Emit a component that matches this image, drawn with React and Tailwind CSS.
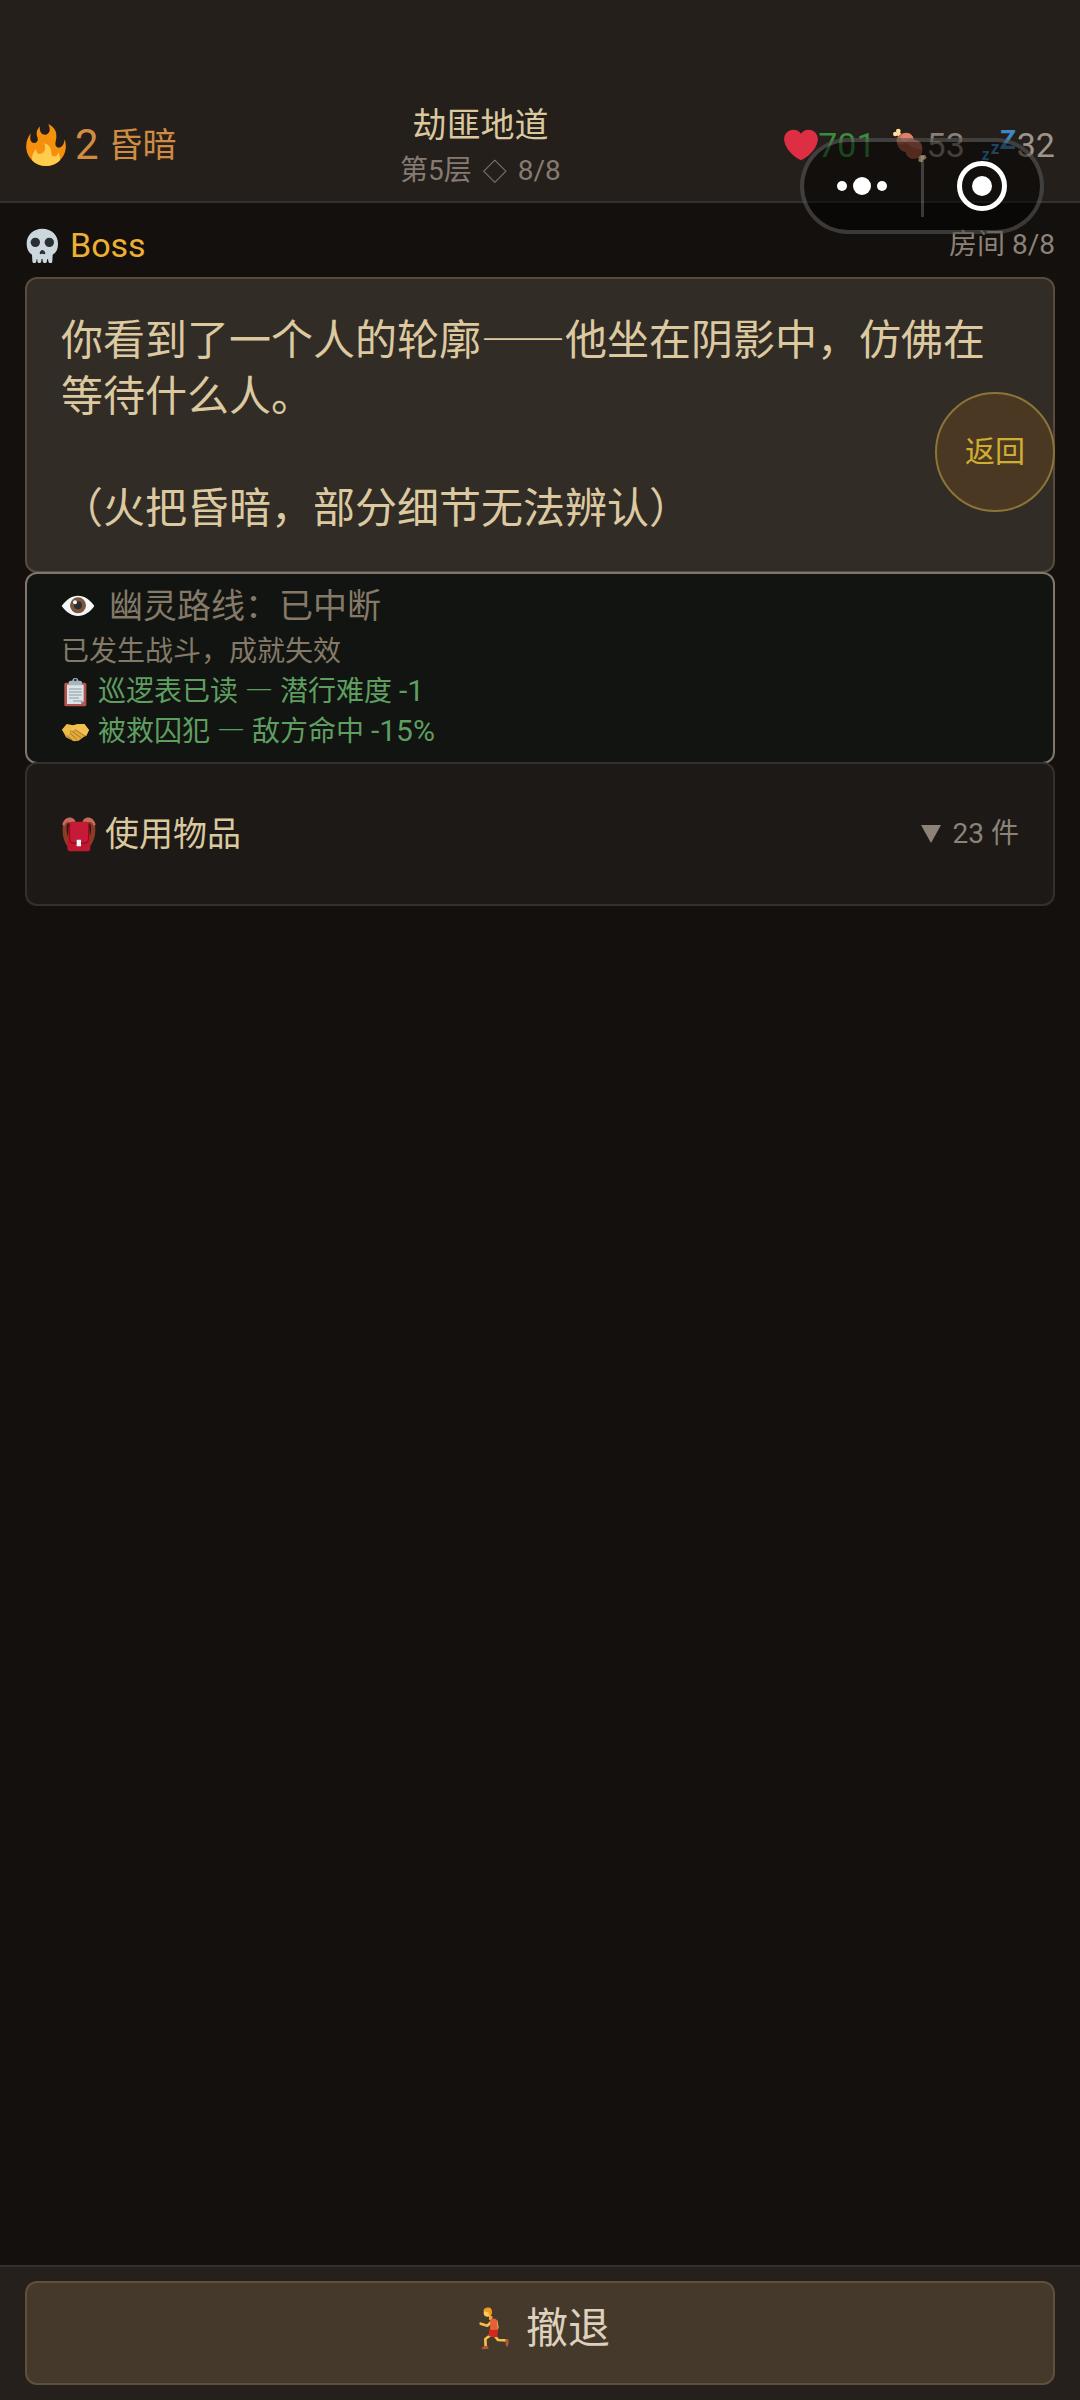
import React, { useState } from 'react';

const FireIcon = () => (
  <svg viewBox="0 0 36 36" className="size-[42px]" aria-hidden="true">
    <path fill="#f4900c" d="M35 19c0-2.062-.367-4.039-1.04-5.868-.46 5.389-3.333 8.157-6.335 6.868-2.812-1.208-.917-5.917-.777-8.164.236-3.809-.012-8.169-6.931-11.794 2.875 5.5.333 8.917-2.333 9.125-2.958.231-5.667-2.542-4.667-7.042-3.238 2.386-3.332 6.402-2.333 9 1.042 2.708-.042 4.958-2.583 5.208-2.84.28-4.418-3.041-2.963-8.333C2.52 10.965 1 14.805 1 19c0 9.389 7.611 17 17 17s17-7.611 17-17z" />
    <path fill="#ffcc4d" d="M28.394 23.999c.148 3.084-2.561 4.293-4.019 3.709-2.106-.843-1.541-2.291-2.083-5.291s-2.625-5.083-5.708-6c2.25 6.333-1.247 8.667-3.08 9.084-1.872.426-3.753-.001-3.968-4.007C7.352 23.668 6 26.676 6 30c0 .368.023.73.055 1.09C9.125 34.124 13.342 36 18 36s8.875-1.876 11.945-4.91c.032-.36.055-.722.055-1.09 0-2.187-.584-4.236-1.606-6.001z" />
  </svg>
);

const HeartIcon = () => (
  <svg viewBox="0 0 36 36" className="size-[34px]" aria-hidden="true">
    <path fill="#dd2e44" d="M35.885 11.833c0-5.45-4.418-9.868-9.867-9.868-3.308 0-6.227 1.633-8.018 4.129-1.791-2.496-4.71-4.129-8.017-4.129-5.45 0-9.868 4.417-9.868 9.868 0 .772.098 1.52.266 2.241C1.751 22.587 11.216 31.568 18 34.034c6.783-2.466 16.249-11.447 17.617-19.959.17-.721.268-1.469.268-2.242z" />
  </svg>
);

const MeatIcon = () => (
  <svg viewBox="443 114 105 105" className="size-[35px]" aria-hidden="true">
    <path d="M460 130l14 14" stroke="#ffdc9a" strokeWidth="9" />
    <path d="M518 190l14 14" stroke="#f0d08c" strokeWidth="9" />
    <g fill="#ffe0a0">
      <circle cx="462" cy="123" r="7" />
      <circle cx="453" cy="132" r="7" />
      <circle cx="464" cy="133" r="6" />
    </g>
    <g fill="#ffdc9a">
      <circle cx="539" cy="202" r="7" />
      <circle cx="529" cy="210" r="7" />
      <circle cx="527" cy="200" r="6" />
    </g>
    <path d="M458 158c-5-14 6-29 27-30 14 0 22 10 24 21 14 1 24 9 25 24 2 19-11 33-26 33-14 0-22-9-24-20-13-3-23-13-26-28z" fill="#bf6952" />
    <path d="M468 143c4-12 18-17 28-12 8 4 11 11 12 17-11-2-20 1-25 8-6-1-13-7-15-13z" fill="#e0806a" />
    <path d="M459 160c8 7 17 5 25-3 8 12 32 23 49 20 0 17-10 29-25 29-14 0-22-9-24-20-13-3-22-12-25-26z" fill="#a55440" />
  </svg>
);

const SleepIcon = () => (
  <svg viewBox="0 0 36 36" className="size-[36px] overflow-visible" aria-hidden="true">
    <g fill="#3b88c3" fontFamily="Lato, sans-serif" fontWeight="900">
      <text x="1" y="33" fontSize="16">z</text>
      <text x="10" y="27" fontSize="18">z</text>
      <text x="19" y="22" fontSize="26">Z</text>
    </g>
  </svg>
);

const SkullIcon = () => (
  <svg viewBox="76 411 105 105" className="size-[35px]" aria-hidden="true">
    <path d="M128 413c28 0 47 19 47 45 0 15-4 26-16 33l-1 20c0 8-11 8-12 0l-1-6h-3v6c0 7-13 7-13 0v-6h-4v6c0 7-12 7-12 0v-6h-2l-1 6c-1 8-11 8-12 0l-1-20c-11-7-16-18-16-33 0-26 19-45 47-45z" fill="#ccd6dd" />
    <circle cx="107" cy="454" r="14" fill="#292f33" />
    <circle cx="149" cy="454" r="14" fill="#292f33" />
    <path d="M120 487c0-5 5-10 8-10s9 5 9 10c0 4-6 2-9 1-3 1-8 3-8-1z" fill="#292f33" />
  </svg>
);

const EyeIcon = () => (
  <svg viewBox="180 94 102 102" className="size-[34px]" aria-hidden="true">
    <path d="M182 145c14-19 30-31 49-31s36 12 49 31c-13 19-30 30-49 30s-35-11-49-30z" fill="#f5f8fa" />
    <circle cx="231" cy="143" r="24" fill="#7d553c" />
    <circle cx="231" cy="143" r="12" fill="#292f33" />
    <circle cx="222" cy="134" r="6" fill="#f5f8fa" />
  </svg>
);

const ClipboardIcon = () => (
  <svg viewBox="180 357 87 87" className="size-[29px]" aria-hidden="true">
    <rect x="190" y="371" width="66" height="71" rx="5" fill="#b5544c" />
    <path d="M198 377h50v50l-8 8h-42z" fill="#dce4e8" />
    <path d="M240 435v-8h8z" fill="#8899a6" />
    <path d="M204 390h38M204 399h38M204 408h38M204 417h30M216 426h26" stroke="#8899a6" strokeWidth="3" />
    <path d="M203 379v-8c0-4 3-6 6-6h5c1-11 17-11 18 0h5c4 0 6 2 6 6v8z" fill="#a7b5bf" />
    <circle cx="223" cy="363" r="4" fill="#292f33" />
  </svg>
);

const HandshakeIcon = () => (
  <svg viewBox="180 480 87 87" className="size-[29px]" aria-hidden="true">
    <path d="M183 515l14-16 19 3 12-3 22-1 14 18-8 15-23 17-14 2-24-12z" fill="#e0ab3c" />
    <path d="M183 515l14-16 19 3-15 33z" fill="#eebb48" />
    <path d="M216 503l-9 15c4 5 12 4 16-3l33 19 8-18-14-18-22 1z" fill="#f0c050" />
    <path d="M207 518c5 5 12 3 16-3l29 20M216 522l25 18M208 526l20 19M199 534l14 12" stroke="#b07a28" strokeWidth="3" fill="none" strokeLinecap="round" />
  </svg>
);

const BackpackIcon = () => (
  <svg viewBox="178 200 108 108" className="size-[36px]" aria-hidden="true">
    <path d="M204 296c-18-10-24-45-20-69 4-18 26-23 33-11l-7 8c-6-6-14-2-15 8-1 14 3 33 12 43z" fill="#8c3b24" />
    <path d="M258 296c19-10 26-45 22-69-4-18-27-23-34-11l7 8c6-6 14-2 15 8 1 14-2 33-12 43z" fill="#8c3b24" />
    <path d="M182 226c4-24 32-29 39-11l-3 9h-9c-4-9-18-8-21 6zM282 226c-4-24-32-29-39-11l3 9h9c4-9 18-8 21 6z" fill="#c9695a" />
    <path d="M212 217h40c7 0 11 5 11 11l3 68c0 7-4 10-9 10h-50c-6 0-10-3-10-10l4-68c0-6 4-11 11-11z" fill="#be1931" />
    <path d="M204 224v44c0 9 5 13 12 13h32c8 0 12-4 12-13v-44" fill="none" stroke="#a0041e" strokeWidth="4" />
    <path d="M206 230c0-8 4-12 11-12h30c8 0 12 4 12 12v37c0 8-4 12-12 12h-30c-7 0-11-4-11-12z" fill="#c51a38" />
    <rect x="225" y="271" width="13" height="20" rx="1" fill="#f5f8fa" />
  </svg>
);

const RunnerIcon = () => (
  <svg viewBox="328 168 120 132" className="h-11 w-10" aria-hidden="true">
    <g fill="none" stroke="#f7bd4a" strokeWidth="8" strokeLinecap="round" strokeLinejoin="round">
      <path d="M394 211l-14 13-20-6" />
      <path d="M407 212l3 18" />
      <path d="M390 252l-16 12 1 22" />
      <path d="M402 254l10 13 25 1" />
    </g>
    <path d="M385 195h10v12h-10z" fill="#eda93a" />
    <path d="M389 205c8-5 18-3 20 3l3 31-24 4z" fill="#e8603a" />
    <path d="M386 237l25-1c1 9 0 17-2 22l-13 1-13-5z" fill="#cf2a20" />
    <circle cx="381" cy="185" r="12" fill="#ffcd52" />
    <path d="M368 179c3-10 18-12 24-5 4 8 0 18-5 22-2-4-3-9-5-13-5 0-11-1-14-4z" fill="#f59a28" />
    <path d="M363 295c0-6 5-9 9-10h10c3 3 1 9-1 9z" fill="#b3543a" />
    <path d="M434 265l9-1c2 7 1 17-2 23-4 0-6-3-6-7z" fill="#b3543a" />
  </svg>
);

const Stat = ({ icon, value, color }) => (
  <span className={`flex items-center ${color}`}>
    {icon}
    {value}
  </span>
);

const Header = () => (
  <header className="flex items-center justify-between border-b-2 border-[#35302c] bg-[#241f1b] px-[25px] pt-[101px] pb-2">
    <div className="flex items-center pb-1 text-[#cf8c42]">
      <FireIcon />
      <span className="ml-2 text-[42px] leading-[48px]">2</span>
      <span className="ml-2.5 text-[34px] leading-[48px]">昏暗</span>
    </div>
    <div className="text-center">
      <h1 className="text-[34px] leading-[48px] text-[#dac89f]">劫匪地道</h1>
      <p className="text-[28px] leading-[44px] text-[#857b72]">
        第5层 <span className="mx-1 text-[24px] leading-none">◇</span> 8/8
      </p>
    </div>
    <div className="flex items-center gap-4 pb-1 text-[34px] leading-[48px]">
      <Stat icon={<HeartIcon />} value={701} color="text-[#388e3c]" />
      <Stat icon={<MeatIcon />} value={53} color="text-[#8b8075]" />
      <Stat icon={<SleepIcon />} value={32} color="text-[#a0948a]" />
    </div>
  </header>
);

// the dash is taken from the CJK face so it fills a whole character cell
const Bonus = ({ icon, name, effect, value }) => (
  <li className="flex items-center gap-2">
    {icon}
    <span>
      {name} <span className="font-['Noto_Sans_CJK_SC',sans-serif] leading-none">—</span> {effect}{' '}
      <span className="text-[30px] leading-none">{value}</span>
    </span>
  </li>
);

// floating capsule of the host app, stays above the header
const Capsule = () => (
  <div className="absolute top-[138px] right-9 flex h-24 w-[244px] items-center rounded-full border-4 border-white/20 bg-black/50">
    <button type="button" aria-label="更多" className="flex h-full flex-1 items-center justify-center gap-1.5">
      <span className="size-2.5 rounded-full bg-white" />
      <span className="size-[18px] rounded-full bg-white" />
      <span className="size-2.5 rounded-full bg-white" />
    </button>
    <span className="h-[62px] w-[3px] bg-white/20" />
    <button type="button" aria-label="关闭" className="flex h-full flex-1 items-center justify-center">
      <span className="flex size-[50px] items-center justify-center rounded-full border-[5px] border-white">
        <span className="size-5 rounded-full bg-white" />
      </span>
    </button>
  </div>
);

const App = () => {
  const [open, setOpen] = useState(false);

  return (
    <div className="relative flex min-h-screen flex-col bg-[#14100d] font-[Roboto,'Noto_Sans_CJK_SC',sans-serif]" lang="zh-CN">
      <Header />

      <main className="flex-1 px-[25px]">
        <div className="flex items-center justify-between pt-4 pb-1.5 leading-[52px]">
          <h2 className="flex items-center gap-2.5 text-[34px] text-[#edb034]">
            <SkullIcon />
            Boss
          </h2>
          <span className="text-[28px] text-[#8d8278]">房间 8/8</span>
        </div>

        <section className="rounded-xl border-2 border-[#5a4a3b] bg-[#322c27] px-[34px] pt-[30px] pb-[38px] font-['Noto_Sans_CJK_SC',sans-serif] text-[42px] leading-[56px] text-[#dcc9a0]">
          <p>你看到了一个人的轮廓——他坐在阴影中，仿佛在等待什么人。</p>
          <p className="mt-14">（火把昏暗，部分细节无法辨认）</p>
        </section>

        <section className="-mt-px rounded-xl border-2 border-[#80766a] bg-[#111410] px-[34px] py-2.5 text-[28px] leading-10">
          <h3 className="mb-1 flex items-center gap-3.5 text-[34px] leading-[44px] text-[#857968]">
            <EyeIcon />
            幽灵路线：已中断
          </h3>
          <p className="text-[#857968]">已发生战斗，成就失效</p>
          <ul className="text-[#5f9e61]">
            <Bonus icon={<ClipboardIcon />} name="巡逻表已读" effect="潜行难度" value="-1" />
            <Bonus icon={<HandshakeIcon />} name="被救囚犯" effect="敌方命中" value="-15%" />
          </ul>
        </section>

        <button
          type="button"
          aria-expanded={open}
          onClick={() => setOpen(!open)}
          className="-mt-0.5 flex w-full items-center justify-between rounded-xl border-2 border-[#34302b] bg-[#1d1916] px-[34px] py-[46px] leading-[48px]"
        >
          <span className="flex items-center gap-2 text-[34px] text-[#dac89f]">
            <BackpackIcon />
            使用物品
          </span>
          <span className="flex items-center gap-3 text-[28px] text-[#8d8278]">
            <svg viewBox="0 0 20 18" className={open ? 'h-[18px] w-5 rotate-180' : 'h-[18px] w-5'} aria-hidden="true">
              <path d="M0 0h20L10 18z" fill="currentColor" />
            </svg>
            23 件
          </span>
        </button>
      </main>

      <footer className="border-t-2 border-[#35302c] bg-[#25201c] px-[25px] pt-3.5 pb-[15px]">
        <button
          type="button"
          className="flex w-full items-center justify-center gap-4 rounded-xl border-2 border-[#605039] bg-[#45392b] pt-4 pb-6 text-[42px] leading-[60px] text-[#ddd0bc]"
        >
          <RunnerIcon />
          撤退
        </button>
      </footer>

      <Capsule />
      <button
        type="button"
        className="absolute top-98 right-[25px] size-[120px] rounded-full border-2 border-[#8c7438] bg-[#4a3823] pb-0.5 text-[30px] text-[#d0ae32]"
      >
        返回
      </button>
    </div>
  );
};

export default App;
